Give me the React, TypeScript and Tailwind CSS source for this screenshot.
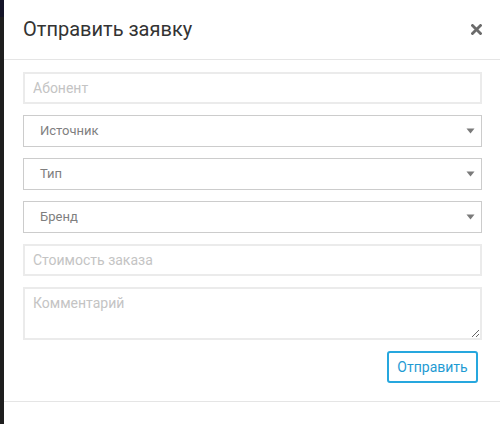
import React from 'react'

const SelectField = ({ label }: { label: string }) => {
  return (
    <div className="flex h-[32px] items-center justify-between border border-[#cccccc] bg-white pl-[16px] pr-[6px]">
      <span className="text-[13px] text-[#7f7f7f]">{label}</span>
      <svg width="9" height="6" viewBox="0 0 9 6">
        <path d="M0.5 0.5 L8.5 0.5 L4.5 5.5 Z" fill="#7a7a7a" />
      </svg>
    </div>
  )
}

const App = () => {
  return (
    <div className="flex h-[424px] w-[500px] overflow-hidden bg-white" style={{ fontFamily: 'Roboto, "Liberation Sans", sans-serif' }}>
      <div className="flex w-[4px] flex-col bg-[#1e1e1e]">
        <div className="h-[17px] bg-[#141428]" />
      </div>

      <div className="flex flex-1 flex-col">
        <div className="flex h-[60px] items-center justify-between border-b border-[#e5e5e5] pl-[19px] pr-[18px]">
          <h2 className="pb-[1px] text-[20px] leading-none text-[#333333]">Отправить заявку</h2>
          <button className="-mt-[1px] flex h-[12px] w-[12px] items-center justify-center">
            <svg width="11" height="11" viewBox="0 0 11 11">
              <path d="M1.5 1.5 L9.5 9.5 M9.5 1.5 L1.5 9.5" stroke="#6b6b6b" strokeWidth="2.8" strokeLinecap="square" />
            </svg>
          </button>
        </div>

        <form className="flex flex-col gap-[11px] pl-[19px] pr-[18px] pt-[12px]">
          <input
            placeholder="Абонент"
            className="h-[32px] border-2 border-[#ebebeb] px-[8px] text-[14px] text-[#555555] outline-none placeholder:text-[#c4c4c4]"
          />
          <SelectField label="Источник" />
          <SelectField label="Тип" />
          <SelectField label="Бренд" />
          <input
            placeholder="Стоимость заказа"
            className="h-[32px] border-2 border-[#ebebeb] px-[8px] text-[14px] text-[#555555] outline-none placeholder:text-[#c4c4c4]"
          />
          <textarea
            placeholder="Комментарий"
            className="block h-[53px] resize-y border-2 border-[#ebebeb] px-[8px] pt-[4px] text-[14px] leading-[20px] text-[#555555] outline-none placeholder:text-[#c4c4c4]"
          />
          <div className="flex justify-end pr-[4px]">
            <button
              type="button"
              className="h-[32px] w-[91px] rounded-[3px] border-2 border-[#26a7de] bg-white text-[14px] text-[#1f9bd3]"
            >
              Отправить
            </button>
          </div>
        </form>

        <div className="mt-[18px] border-b border-[#e5e5e5]" />
      </div>
    </div>
  )
}

export default App
